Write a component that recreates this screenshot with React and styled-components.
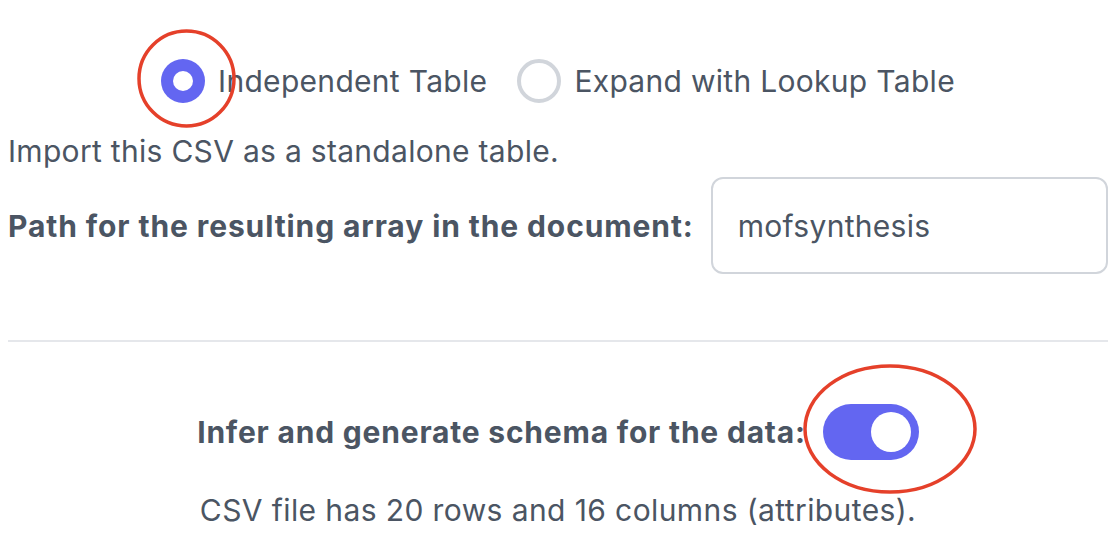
import React from "react";
import styled, { createGlobalStyle } from "styled-components";

const Global = createGlobalStyle`
  html, body { margin: 0; padding: 0; background: #ffffff; }
  body { font-family: Inter, "Noto Sans", "Liberation Sans", sans-serif; color: #4b5563; }
`;

const Page = styled.div`
  position: relative;
  padding: 59px 4px 0 8px;
  width: 1112px;
  height: 558px;
  box-sizing: border-box;
  overflow: hidden;
  letter-spacing: 0.3px;
`;

const RadioGroup = styled.div`
  display: flex;
  justify-content: center;
  align-items: center;
  gap: 30px;
  height: 44px;
`;

const RadioOption = styled.label`
  display: flex;
  align-items: center;
  gap: 13px;
  font-size: 30px;
  line-height: 44px;
  color: #4b5563;
`;

const RadioDot = styled.span`
  width: 44px;
  height: 44px;
  border-radius: 50%;
  box-sizing: border-box;
  background: ${(p) => (p.$checked ? "#6366f1" : "#ffffff")};
  border: ${(p) => (p.$checked ? "none" : "4px solid #d1d5db")};
  display: flex;
  align-items: center;
  justify-content: center;
  &::after {
    content: "";
    display: ${(p) => (p.$checked ? "block" : "none")};
    width: 20px;
    height: 20px;
    border-radius: 50%;
    background: #ffffff;
  }
`;

const Description = styled.p`
  margin: 26px 0 0 0;
  font-size: 30px;
  line-height: 44px;
`;

const PathRow = styled.div`
  display: flex;
  align-items: center;
  gap: 17px;
  margin-top: 4px;
`;

const PathLabel = styled.span`
  font-size: 30px;
  font-weight: 700;
  letter-spacing: 0.9px;
  line-height: 44px;
  white-space: nowrap;
`;

const PathInput = styled.div`
  flex: 1;
  height: 97px;
  box-sizing: border-box;
  border: 2px solid #d1d5db;
  border-radius: 12px;
  padding: 0 25px;
  display: flex;
  align-items: center;
  font-size: 30px;
  color: #4b5563;
`;

const Divider = styled.hr`
  margin: 66px 0 0 0;
  border: none;
  border-top: 2px solid #e5e7eb;
`;

const ToggleRow = styled.div`
  display: flex;
  justify-content: center;
  align-items: center;
  gap: 17px;
  margin-top: 62px;
`;

const ToggleLabel = styled.span`
  font-size: 30px;
  font-weight: 700;
  letter-spacing: 0.8px;
  line-height: 44px;
`;

const Toggle = styled.span`
  width: 96px;
  height: 56px;
  border-radius: 28px;
  background: #6366f1;
  display: flex;
  align-items: center;
  justify-content: flex-end;
  padding: 0 8px;
  box-sizing: border-box;
  &::after {
    content: "";
    width: 40px;
    height: 40px;
    border-radius: 50%;
    background: #ffffff;
  }
`;

const Summary = styled.p`
  margin: 28px 0 0 0;
  text-align: center;
  font-size: 30px;
  letter-spacing: 0.4px;
  line-height: 44px;
`;

const Annotation = styled.svg`
  position: absolute;
  left: 0;
  top: 0;
  pointer-events: none;
`;

export default function App() {
  return (
    <>
      <Global />
      <Page>
        <RadioGroup>
          <RadioOption>
            <RadioDot $checked />
            Independent Table
          </RadioOption>
          <RadioOption>
            <RadioDot />
            Expand with Lookup Table
          </RadioOption>
        </RadioGroup>
        <Description>Import this CSV as a standalone table.</Description>
        <PathRow>
          <PathLabel>Path for the resulting array in the document:</PathLabel>
          <PathInput>mofsynthesis</PathInput>
        </PathRow>
        <Divider />
        <ToggleRow>
          <ToggleLabel>Infer and generate schema for the data:</ToggleLabel>
          <Toggle />
        </ToggleRow>
        <Summary>CSV file has 20 rows and 16 columns (attributes).</Summary>
        <Annotation width="1112" height="558" viewBox="0 0 1112 558">
          <ellipse cx="186.5" cy="78.5" rx="47.5" ry="47.5" fill="none" stroke="#e5402a" strokeWidth="3.5" />
          <ellipse cx="890" cy="429" rx="85" ry="63" fill="none" stroke="#e5402a" strokeWidth="3.5" />
        </Annotation>
      </Page>
    </>
  );
}
